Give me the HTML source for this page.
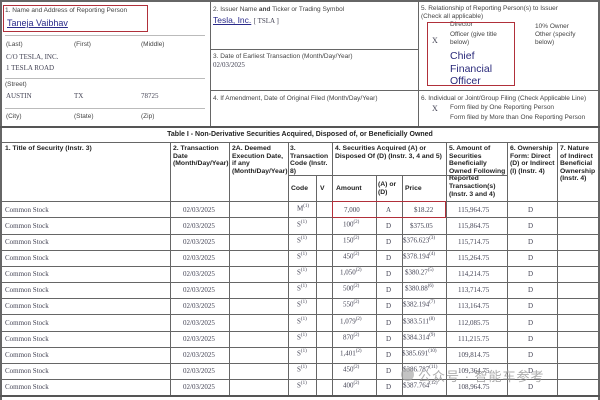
<!DOCTYPE html>
<html><head><meta charset="utf-8"><style>
*{margin:0;padding:0;box-sizing:border-box}
body{width:600px;height:400px;overflow:hidden;background:#fff;position:relative;font-family:"Liberation Sans",sans-serif;color:#333}
.a{position:absolute}
.hl{position:absolute;height:1px;background:#666}
.vl{position:absolute;width:1px;background:#666}
.s{font-size:6.5px;color:#444;line-height:8px}
.sf{font-family:"Liberation Serif",serif;font-size:7px;color:#445}
.lk{color:#2a2a8a;text-decoration:underline}
.h{font-size:6.8px;color:#222;line-height:7.6px}
.red{position:absolute;border:1.5px solid #b0303a}
.row{position:absolute;left:0;width:600px;height:16px;font-family:"Liberation Serif",serif;font-size:7px;color:#445}
.row span{position:absolute;top:4px}
sup{font-size:5px}
</style></head><body>
<div class="a" style="left:0;top:0;width:600px;height:400px;border:2px solid #666;border-bottom:none"></div>
<div class="vl" style="left:210px;top:0;height:127px"></div>
<div class="vl" style="left:418px;top:0;height:127px"></div>
<div class="hl" style="left:210px;top:49px;width:208px"></div>
<div class="hl" style="left:210px;top:90px;width:390px"></div>
<div class="hl" style="left:0;top:126px;width:600px;height:2px;background:#555"></div>
<div class="hl" style="left:5px;top:35px;width:200px;background:#bbb"></div>
<div class="hl" style="left:5px;top:78px;width:200px;background:#bbb"></div>
<div class="hl" style="left:5px;top:108px;width:200px;background:#bbb"></div>

<div class="a s" style="left:5px;top:7px">1. Name and Address of Reporting Person</div>
<div class="a lk" style="left:7px;top:18px;font-size:9px">Taneja Vaibhav</div>
<div class="red" style="left:3px;top:5px;width:145px;height:27px"></div>
<div class="a s" style="left:6px;top:41px">(Last)</div>
<div class="a s" style="left:74px;top:41px">(First)</div>
<div class="a s" style="left:141px;top:41px">(Middle)</div>
<div class="a sf" style="left:6px;top:53px">C/O TESLA, INC.</div>
<div class="a sf" style="left:6px;top:64px">1 TESLA ROAD</div>
<div class="a s" style="left:5px;top:81px">(Street)</div>
<div class="a sf" style="left:6px;top:92px">AUSTIN</div>
<div class="a sf" style="left:74px;top:92px">TX</div>
<div class="a sf" style="left:141px;top:92px">78725</div>
<div class="a s" style="left:6px;top:113px">(City)</div>
<div class="a s" style="left:74px;top:113px">(State)</div>
<div class="a s" style="left:141px;top:113px">(Zip)</div>

<div class="a s" style="left:213px;top:6px">2. Issuer Name <b>and</b> Ticker or Trading Symbol</div>
<div class="a" style="left:213px;top:15px;font-size:8.5px"><span class="lk" style="font-family:'Liberation Sans'">Tesla, Inc.</span> <span class="sf" style="font-size:7px">[ TSLA ]</span></div>
<div class="a s" style="left:213px;top:53px">3. Date of Earliest Transaction (Month/Day/Year)</div>
<div class="a sf" style="left:213px;top:61px">02/03/2025</div>
<div class="a s" style="left:213px;top:95px">4. If Amendment, Date of Original Filed (Month/Day/Year)</div>

<div class="a s" style="left:421px;top:5px">5. Relationship of Reporting Person(s) to Issuer<br>(Check all applicable)</div>
<div class="a s" style="left:450px;top:21px">Director</div>
<div class="a s" style="left:535px;top:23px">10% Owner</div>
<div class="a sf" style="left:432px;top:36px;font-size:8px">X</div>
<div class="a s" style="left:450px;top:31px">Officer (give title<br>below)</div>
<div class="a s" style="left:535px;top:31px">Other (specify<br>below)</div>
<div class="a" style="left:450px;top:50px;font-size:10.5px;line-height:12.5px;color:#2a2a7a">Chief<br>Financial<br>Officer</div>
<div class="red" style="left:427px;top:22px;width:88px;height:64px"></div>
<div class="a s" style="left:421px;top:95px">6. Individual or Joint/Group Filing (Check Applicable Line)</div>
<div class="a sf" style="left:432px;top:104px;font-size:8px">X</div>
<div class="a s" style="left:450px;top:104px">Form filed by One Reporting Person</div>
<div class="a s" style="left:450px;top:114px">Form filed by More than One Reporting Person</div>

<div class="a" style="left:0;top:131px;width:600px;text-align:center;font-size:7px;font-weight:bold;color:#222">Table I - Non-Derivative Securities Acquired, Disposed of, or Beneficially Owned</div>
<div class="hl" style="left:0;top:142px;width:600px"></div>
<div class="hl" style="left:288px;top:175px;width:219px"></div>
<div class="hl" style="left:0;top:201px;width:600px"></div>

<div class="vl" style="left:170px;top:142px;height:253px"></div>
<div class="vl" style="left:229px;top:142px;height:253px"></div>
<div class="vl" style="left:288px;top:142px;height:253px"></div>
<div class="vl" style="left:316px;top:175px;height:220px"></div>
<div class="vl" style="left:332px;top:142px;height:253px"></div>
<div class="vl" style="left:376px;top:175px;height:220px"></div>
<div class="vl" style="left:402px;top:175px;height:220px"></div>
<div class="vl" style="left:446px;top:142px;height:253px"></div>
<div class="vl" style="left:507px;top:142px;height:253px"></div>
<div class="vl" style="left:557px;top:142px;height:253px"></div>

<div class="a h" style="left:5px;top:145px;font-weight:bold">1. Title of Security (Instr. 3)</div>
<div class="a h" style="left:173px;top:145px;font-weight:bold">2. Transaction<br>Date<br>(Month/Day/Year)</div>
<div class="a h" style="left:232px;top:145px;font-weight:bold">2A. Deemed<br>Execution Date,<br>if any<br>(Month/Day/Year)</div>
<div class="a h" style="left:290px;top:145px;font-weight:bold">3.<br>Transaction<br>Code (Instr.<br>8)</div>
<div class="a h" style="left:335px;top:145px;font-weight:bold">4. Securities Acquired (A) or<br>Disposed Of (D) (Instr. 3, 4 and 5)</div>
<div class="a h" style="left:449px;top:145px;font-weight:bold">5. Amount of<br>Securities<br>Beneficially<br>Owned Following<br>Reported<br>Transaction(s)<br>(Instr. 3 and 4)</div>
<div class="a h" style="left:510px;top:145px;font-weight:bold">6. Ownership<br>Form: Direct<br>(D) or Indirect<br>(I) (Instr. 4)</div>
<div class="a h" style="left:560px;top:145px;font-weight:bold">7. Nature<br>of Indirect<br>Beneficial<br>Ownership<br>(Instr. 4)</div>
<div class="a h" style="left:291px;top:185px;font-weight:bold">Code</div>
<div class="a h" style="left:320px;top:185px;font-weight:bold">V</div>
<div class="a h" style="left:336px;top:185px;font-weight:bold">Amount</div>
<div class="a h" style="left:378px;top:181px;font-weight:bold">(A) or<br>(D)</div>
<div class="a h" style="left:405px;top:185px;font-weight:bold">Price</div>

<div class="hl" style="left:0;top:217px;width:600px"></div>
<div class="hl" style="left:0;top:234px;width:600px"></div>
<div class="hl" style="left:0;top:250px;width:600px"></div>
<div class="hl" style="left:0;top:266px;width:600px"></div>
<div class="hl" style="left:0;top:282px;width:600px"></div>
<div class="hl" style="left:0;top:298px;width:600px"></div>
<div class="hl" style="left:0;top:314px;width:600px"></div>
<div class="hl" style="left:0;top:331px;width:600px"></div>
<div class="hl" style="left:0;top:347px;width:600px"></div>
<div class="hl" style="left:0;top:363px;width:600px"></div>
<div class="hl" style="left:0;top:379px;width:600px"></div>
<div class="hl" style="left:0;top:395px;width:600px;height:2px;background:#555"></div>

<div class="row" style="top:202px"><span style="left:5px">Common Stock</span><span style="left:183px">02/03/2025</span><span style="left:297px;top:2px">M<sup>(1)</sup></span><span style="left:344px">7,000</span><span style="left:386px">A</span><span style="left:414px">$18.22</span><span style="left:458px">115,964.75</span><span style="left:528px">D</span></div>
<div class="red" style="left:332px;top:201px;width:114px;height:17px"></div>
<div class="row" style="top:218px"><span style="left:5px">Common Stock</span><span style="left:183px">02/03/2025</span><span style="left:297px;top:2px">S<sup>(1)</sup></span><span style="left:343px;top:2px">100<sup>(2)</sup></span><span style="left:386px">D</span><span style="left:410px">$375.05</span><span style="left:458px">115,864.75</span><span style="left:528px">D</span></div>
<div class="row" style="top:234px"><span style="left:5px">Common Stock</span><span style="left:183px">02/03/2025</span><span style="left:297px;top:2px">S<sup>(1)</sup></span><span style="left:343px;top:2px">150<sup>(2)</sup></span><span style="left:386px">D</span><span style="left:403px;top:2px">$376.623<sup>(3)</sup></span><span style="left:458px">115,714.75</span><span style="left:528px">D</span></div>
<div class="row" style="top:250px"><span style="left:5px">Common Stock</span><span style="left:183px">02/03/2025</span><span style="left:297px;top:2px">S<sup>(1)</sup></span><span style="left:343px;top:2px">450<sup>(2)</sup></span><span style="left:386px">D</span><span style="left:403px;top:2px">$378.194<sup>(4)</sup></span><span style="left:458px">115,264.75</span><span style="left:528px">D</span></div>
<div class="row" style="top:266px"><span style="left:5px">Common Stock</span><span style="left:183px">02/03/2025</span><span style="left:297px;top:2px">S<sup>(1)</sup></span><span style="left:340px;top:2px">1,050<sup>(2)</sup></span><span style="left:386px">D</span><span style="left:405px;top:2px">$380.27<sup>(5)</sup></span><span style="left:458px">114,214.75</span><span style="left:528px">D</span></div>
<div class="row" style="top:282px"><span style="left:5px">Common Stock</span><span style="left:183px">02/03/2025</span><span style="left:297px;top:2px">S<sup>(1)</sup></span><span style="left:343px;top:2px">500<sup>(2)</sup></span><span style="left:386px">D</span><span style="left:405px;top:2px">$380.88<sup>(6)</sup></span><span style="left:458px">113,714.75</span><span style="left:528px">D</span></div>
<div class="row" style="top:298px"><span style="left:5px">Common Stock</span><span style="left:183px">02/03/2025</span><span style="left:297px;top:2px">S<sup>(1)</sup></span><span style="left:343px;top:2px">550<sup>(2)</sup></span><span style="left:386px">D</span><span style="left:403px;top:2px">$382.194<sup>(7)</sup></span><span style="left:458px">113,164.75</span><span style="left:528px">D</span></div>
<div class="row" style="top:315px"><span style="left:5px">Common Stock</span><span style="left:183px">02/03/2025</span><span style="left:297px;top:2px">S<sup>(1)</sup></span><span style="left:340px;top:2px">1,079<sup>(2)</sup></span><span style="left:386px">D</span><span style="left:403px;top:2px">$383.511<sup>(8)</sup></span><span style="left:458px">112,085.75</span><span style="left:528px">D</span></div>
<div class="row" style="top:331px"><span style="left:5px">Common Stock</span><span style="left:183px">02/03/2025</span><span style="left:297px;top:2px">S<sup>(1)</sup></span><span style="left:343px;top:2px">870<sup>(2)</sup></span><span style="left:386px">D</span><span style="left:403px;top:2px">$384.314<sup>(9)</sup></span><span style="left:458px">111,215.75</span><span style="left:528px">D</span></div>
<div class="row" style="top:347px"><span style="left:5px">Common Stock</span><span style="left:183px">02/03/2025</span><span style="left:297px;top:2px">S<sup>(1)</sup></span><span style="left:340px;top:2px">1,401<sup>(2)</sup></span><span style="left:386px">D</span><span style="left:402px;top:2px">$385.691<sup>(10)</sup></span><span style="left:458px">109,814.75</span><span style="left:528px">D</span></div>
<div class="row" style="top:363px"><span style="left:5px">Common Stock</span><span style="left:183px">02/03/2025</span><span style="left:297px;top:2px">S<sup>(1)</sup></span><span style="left:343px;top:2px">450<sup>(2)</sup></span><span style="left:386px">D</span><span style="left:403px;top:2px">$386.787<sup>(11)</sup></span><span style="left:458px">109,364.75</span><span style="left:528px">D</span></div>
<div class="row" style="top:379px"><span style="left:5px">Common Stock</span><span style="left:183px">02/03/2025</span><span style="left:297px;top:2px">S<sup>(1)</sup></span><span style="left:343px;top:2px">400<sup>(2)</sup></span><span style="left:386px">D</span><span style="left:403px;top:2px">$387.764<sup>(12)</sup></span><span style="left:458px">108,964.75</span><span style="left:528px">D</span></div>

<div class="a" style="left:401px;top:368px;width:13px;height:13px;border-radius:50%;background:#aaa;opacity:.7"></div>
<div class="a" style="left:418px;top:366px;font-family:'Liberation Sans','Noto Sans CJK SC',sans-serif;font-size:13px;color:#999;opacity:.8;letter-spacing:1px">公众号 · 智能车参考</div>
</body></html>
